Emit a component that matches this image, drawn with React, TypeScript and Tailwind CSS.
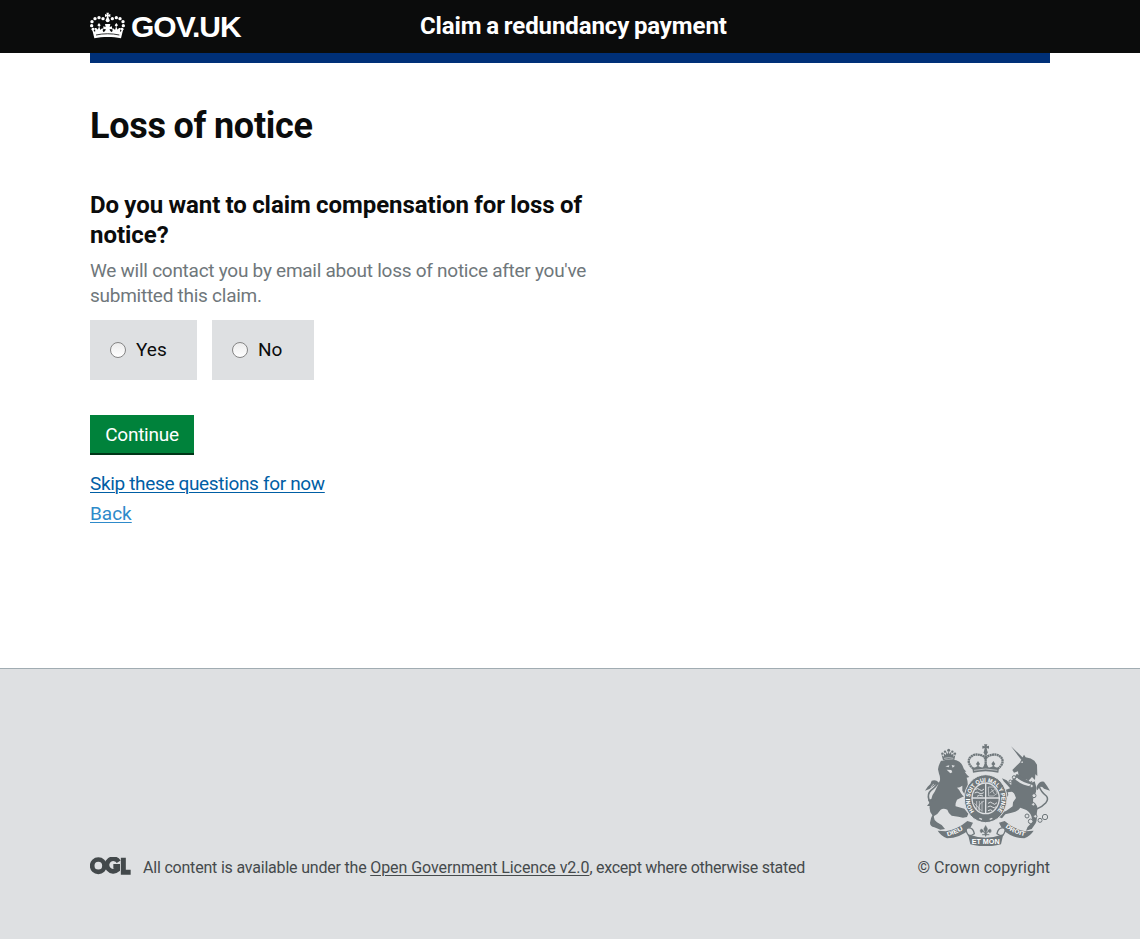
import React from "react";

function CrownLogo() {
  return (
    <svg className="block h-7 w-[35px] shrink-0" viewBox="30 36 105 84" fill="#fff" aria-hidden="true">
      <path d="M79 38h8l-2 6 6-2v9l-6-2 2 10h-8l2-10-6 2v-9l6 2z" />
      <circle cx="83" cy="61" r="6" />
      <circle cx="69" cy="56" r="5" />
      <circle cx="57" cy="53" r="5" />
      <circle cx="45" cy="56" r="5" />
      <circle cx="36" cy="65" r="5" />
      <circle cx="35" cy="77" r="5" />
      <circle cx="39" cy="88" r="4.4" />
      <circle cx="97" cy="56" r="5" />
      <circle cx="109" cy="53" r="5" />
      <circle cx="120" cy="56" r="5" />
      <circle cx="129" cy="65" r="5" />
      <circle cx="130" cy="77" r="5" />
      <circle cx="126" cy="88" r="4.4" />
      <path d="M43 115 36 86l9 10c2-4 0-9-2-12 5-1 9 1 10 5l4-9-5-4 5-7 5 7-4 4 3 10c3-4 6-5 9-4-3 4-2 8 1 10 4-1 6-5 6-9l-7 1v-9l7 2-2-9h16l-2 9 7-2v9l-7-1c0 4 2 8 6 9 3-2 4-6 1-10 3-1 6 0 9 4l3-10-4-4 5-7 5 7-5 4 4 9c1-4 5-6 10-5-2 3-4 8-2 12l9-10-7 29c-25-5-55-5-80 0z" />
      <path d="M48 105c23-5 47-5 70 0" fill="none" stroke="#0b0c0c" strokeWidth="2.5" />
    </svg>
  );
}

function OglLogo() {
  return (
    <svg className="-mt-px block h-[18px] w-[41px] shrink-0" viewBox="0 0 123 54" fill="none" stroke="#43494b" aria-hidden="true">
      <circle cx="25" cy="26" r="18.5" strokeWidth="14" />
      <path d="M86 14A19 19 0 1 0 83 38V28H70" strokeWidth="14" />
      <path d="M100 2v44h22" strokeWidth="15" />
    </svg>
  );
}

function Crest() {
  return (
    <svg className="block h-[102px] w-[125px]" viewBox="45 27 375 306" fill="#6f777b" aria-hidden="true">
      <defs>
        <path id="garter" d="M193 229A47 52 0 1 1 261 229" />
        <path id="left-scroll" d="M112 304Q144 296 166 279" />
        <path id="right-scroll" d="M286 277Q310 296 348 304" />
      </defs>

      {/* lion */}
      <path d="M99 76 95 60l7 5-1-11 6 6 3-10 3 8 3-10 3 10 3-8 3 10 6-6-1 11 6-5-3 15q-17-5-34 1z" />
      <g>
        <circle cx="97" cy="56" r="3.6" />
        <circle cx="105" cy="50" r="3.6" />
        <circle cx="116" cy="46" r="4.5" />
        <circle cx="127" cy="50" r="3.6" />
        <circle cx="135" cy="56" r="3.6" />
      </g>
      <path d="M102 70q14-4 28 0" fill="none" stroke="#dee0e2" strokeWidth="2" />
      <path d="M97 77q22-7 42-1 13 4 18 15 3 12 12 19-3 1-5 0 8 12 14 16l-8 2q4 12 3 24 6 10 2 28l-18 6-16 8q-6 12-4 20l26 7 12 15-4 10-12 2-14-3-20-3q-10-7-13-18-12-6-20 0-8 13-20 19-2 12 9 19l14 8 10 12-14 2-18-7q-13-3-13-14 2-14 7-22-10-11-8-28l-8 0 7-9-4-10 10-2q4-16 10-22 9-17 16-34 1-12-3-20l-3-13q2-14 9-26z" />
      <path d="M106 94l12-3-2 6zM125 90l10 2-7 6zM110 104l14 1 3 7-6 3z" fill="#dee0e2" />
      <path d="M157 152q-8 6-16 6 7 5 12 17l8 10 2-8-6-10z" fill="#dee0e2" />
      <path d="M84 184q-20 22-27 11-6-18 6-29 17-12 21-24" fill="none" stroke="#6f777b" strokeWidth="5" />
      <path d="M88 146q-8-14-23-9-2 12-12 18l-8 12q15-4 22-12 8-7 21-9z" />
      <path d="M72 147q-8 5-9 10" fill="none" stroke="#dee0e2" strokeWidth="2" />

      {/* unicorn */}
      <path d="M303 34l39 37-7 5zM329 83l9-16 4-8 5 8q17 2 26 10l8 12 1 34-6-5-1 17-9-9-9 10-31-10-2-17-12 4-5-8z" />
      <path d="M331 82l7-3 1 5z" fill="#dee0e2" />
      <path d="M320 117l46 26 8-4 4 14q3 16-4 28-7 12-4 21 14 8 12 22-2 10-2 20 2 10-3 21l-12 17-17 5q2-11 13-20l5-16q-2-16-17-26l-18-7q-8 12-26 15l-19 5-10 12-12-5q8-13 24-17l20-14 1-12 9-13q-4-14-12-22-4-14-1-30z" />
      <path d="M318 130q20 18 48 21" fill="none" stroke="#dee0e2" strokeWidth="7" />
      <path d="M315 132l7-13 5 13 6-9 4 14 7-9 2 13 8-8 3 12 8-6 2 10" fill="none" stroke="#6f777b" strokeWidth="3" />
      <path d="M323 146l-20 4-13-14-14-6 5 9 10 10 12 14 22 5zM320 160l-20 0-12 4-4 14 6 10 5-8-2-8 12-2 14 6z" />
      <path d="M382 151q7-14 20-11 8 10 18 27l-18-6q-5-8-13-5l-7 10q-5-6 0-15z" />
      <path d="M380 222q16-6 27-18 10-12 2-21-16-12-22-30" fill="none" stroke="#6f777b" strokeWidth="4.5" />
      <g fill="#dee0e2" stroke="#6f777b" strokeWidth="3">
        <circle cx="312" cy="127" r="5" />
        <circle cx="301" cy="139" r="4" />
        <circle cx="365" cy="153" r="5" />
        <circle cx="372" cy="182" r="6" />
        <circle cx="370" cy="208" r="5" />
        <circle cx="351" cy="243" r="6" />
        <circle cx="362" cy="259" r="7" />
        <circle cx="376" cy="244" r="5" />
        <circle cx="390" cy="256" r="6" />
        <circle cx="405" cy="246" r="8" />
      </g>

      {/* royal crown */}
      <path d="M222 28h10l-2 6 7-2v9l-7-2 2 11h-10l2-11-7 2v-9l7 2z" />
      <circle cx="227" cy="52" r="6" />
      <path d="M190 101q-20-16-11-32 15-18 42-5l6 7 6-7q27-13 42 5 9 16-11 32" fill="none" stroke="#6f777b" strokeWidth="7" strokeDasharray="6 1.2" />
      <path d="M227 55v47" stroke="#6f777b" strokeWidth="7" strokeDasharray="5 1" />
      <path d="M189 113l-2-15q9 1 16-5l-5-6 6-9 6 9-5 6q6 5 14 4l8-15 8 15q8 1 14-4l-5-6 6-9 6 9-5 6q7 6 16 5l-2 15q-38-9-76 0z" />
      <path d="M192 106q35-8 70 0" stroke="#dee0e2" strokeWidth="2" fill="none" />

      {/* garter and shield */}
      <ellipse cx="227" cy="191" rx="64" ry="72" stroke="#dee0e2" strokeWidth="3" />
      <ellipse cx="227" cy="190" rx="43" ry="48" fill="#dee0e2" />
      <ellipse cx="227" cy="190" rx="39" ry="44" />
      <g fill="none" stroke="#dee0e2" strokeWidth="3">
        <path d="M227 145v90M186 189h82" strokeWidth="4" />
        <path d="M196 164q7-7 13 0t13-2M194 174q8-6 13 0t14-1M201 184q6-6 18-1M234 205q8-7 14 0t13-2M233 216q8-6 14 0t11-1M234 227q8-5 13 0" />
        <path d="M235 156h17l10 19-12 8h-14zM244 162l9 15M254 163l-15 11M200 198v25M208 198v30M216 198v32M193 205l21 22M222 198q-20 10-15 28" strokeWidth="2" />
      </g>
      <text fill="#fff" fontFamily="Liberation Sans, sans-serif" fontWeight="700" fontSize="18">
        <textPath href="#garter" textLength="232" lengthAdjust="spacingAndGlyphs">HONI SOIT QUI MAL Y PENSE</textPath>
      </text>
      <path d="M208 250l8 3M239 253l8-3" stroke="#dee0e2" strokeWidth="4" />

      {/* motto scroll */}
      <path d="M83 287l24 2q36-6 65-31l17 5-10 20q-30 27-68 27-18-7-28-23zM371 287l-24 2q-36-6-63-31l-17 5 10 20q28 27 66 27 18-7 28-23z" />
      <path d="M176 302q-13-18-3-23 16-3 20 17-8 6-17 6zM278 302q13-18 3-23-16-3-20 17 8 6 17 6z" fill="#dee0e2" stroke="#6f777b" strokeWidth="4" />
      <path d="M174 298q53 20 106 0l-7 30q-46 12-92 0z" />
      <path d="M227 269l7 13-4 10q5-12 11-11 8 6-1 14l-5-4-5 6h8v4h-8l-3 6-3-6h-8v-4h8l-5-6-5 4q-9-8-1-14 6-1 11 11l-4-10z" stroke="#dee0e2" strokeWidth="1" />
      <g fill="#fff" fontFamily="Liberation Sans, sans-serif" fontWeight="700">
        <text fontSize="18"><textPath href="#left-scroll" textLength="52" lengthAdjust="spacingAndGlyphs">DIEU</textPath></text>
        <text fontSize="18"><textPath href="#right-scroll" textLength="64" lengthAdjust="spacingAndGlyphs">DROIT</textPath></text>
        <text x="185" y="327" fontSize="20" textLength="84" lengthAdjust="spacingAndGlyphs">ET MON</text>
      </g>
    </svg>
  );
}

function RadioOption({ label, className }: { label: string; className: string }) {
  return (
    <label className={`flex h-[60px] items-center bg-[#dee0e2] pl-5 text-[19px] leading-[25px] ${className}`}>
      <input
        type="radio"
        name="loss-of-notice"
        className="mr-2.5 size-4 appearance-none rounded-full border border-[#858585] bg-linear-to-b from-[#ececec] to-white"
      />
      <span className="pb-0.5">{label}</span>
    </label>
  );
}

export default function App() {
  return (
    <div className="flex min-h-[939px] flex-col bg-white font-['Roboto',sans-serif] text-[#0b0c0c]">
      <header className="h-[53px] bg-[#0b0c0c] text-white">
        <div className="mx-auto flex w-[960px] pt-3">
          <div className="flex w-[330px]">
            <CrownLogo />
            <span className="ml-1.5 font-['Liberation_Sans',sans-serif] text-[30px] leading-[30px] font-bold tracking-[-1px]">GOV.UK</span>
          </div>
          <span className="text-[24px] leading-7 font-bold tracking-[-0.1px] [word-spacing:-1.1px]">Claim a redundancy payment</span>
        </div>
      </header>
      <div className="mx-auto h-2.5 w-[960px] bg-[#003078]" />

      <main className="mx-auto w-[960px] grow">
        <h1 className="mt-[43px] text-[36px] leading-10 font-bold tracking-[-0.25px] [word-spacing:-1px]">Loss of notice</h1>
        <form className="mt-11">
          <h2 className="text-[24px] leading-[30px] font-bold tracking-[-0.05px] [word-spacing:-0.6px]">
            Do you want to claim compensation for loss of<br />notice?
          </h2>
          <p className="mt-2 text-[19px] leading-[25px] tracking-[-0.26px] text-[#6f777b]">
            We will contact you by email about loss of notice after you've<br />submitted this claim.
          </p>
          <div className="mt-3 flex gap-[15px]">
            <RadioOption label="Yes" className="w-[107px]" />
            <RadioOption label="No" className="w-[102px]" />
          </div>
          <button type="button" className="mt-[35px] block h-10 w-[104px] border-b-2 border-[#003618] bg-[#00823b] pt-px text-[19px] leading-[37px] tracking-[-0.25px] text-white">
            Continue
          </button>
          <div className="mt-[14px] flex flex-col items-start text-[19px] leading-[30px]">
            <a href="#" className="tracking-[-0.34px] text-[#005ea5] underline decoration-1 underline-offset-2">Skip these questions for now</a>
            <a href="#" className="text-[#2e8aca] underline decoration-1 underline-offset-2">Back</a>
          </div>
        </form>
      </main>

      <footer className="h-[271px] border-t border-[#a1acb2] bg-[#dee0e2] text-[16px] leading-5 text-[#454a4c]">
        <div className="mx-auto flex w-[960px] items-end justify-between pt-[75px]">
          <div className="flex">
            <OglLogo />
            <p className="ml-3 tracking-[-0.2px]">
              All content is available under the <a href="#" className="tracking-[-0.07px] underline decoration-1 underline-offset-2">Open Government Licence v2.0</a><span className="tracking-[-0.28px]">, except where otherwise stated</span>
            </p>
          </div>
          <div className="flex flex-col items-end">
            <Crest />
            <p className="mt-3">© Crown copyright</p>
          </div>
        </div>
      </footer>
    </div>
  );
}
